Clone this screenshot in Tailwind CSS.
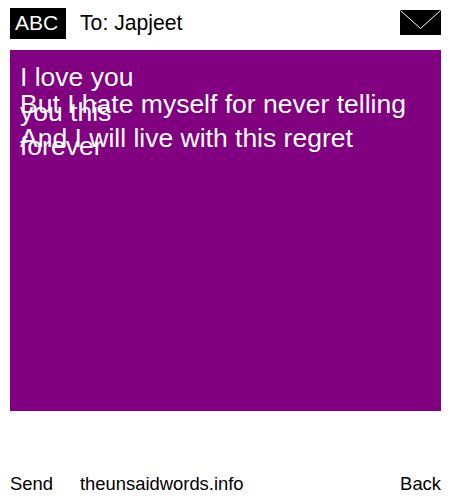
<!DOCTYPE html>
<html lang="en">
<head>
  <meta charset="UTF-8">
  <meta name="viewport" content="width=device-width, initial-scale=1.0">
  <title>The Unsaid Words</title>
  <script src="https://cdn.jsdelivr.net/npm/@tailwindcss/browser@4"></script>
</head>
<body class="bg-white text-black font-['Liberation_Sans',Arial,sans-serif]">
  <div class="flex h-[500px] w-[450px] flex-col pl-[10px] pr-[9px]">
    <header class="flex h-[50px] shrink-0 items-start pt-2">
      <div class="flex h-[31px] w-14 items-center bg-black pb-[2px] pl-[5px] text-[21px] text-white">ABC</div>
      <div class="ml-[14px] flex h-[31px] flex-1 items-center pb-[2px] text-[21.2px]">To: Japjeet</div>
      <svg class="mt-[2px] h-[25px] w-[41px]" viewBox="0 0 41 25">
        <rect width="41" height="25" fill="#000" />
        <path d="M0.5 0.5 L20.5 18.5 L40.5 0.5" fill="none" stroke="#fff" stroke-width="1" />
      </svg>
    </header>
    <main class="h-[361px] shrink-0 bg-[#800080] px-[10px] pt-[23px] text-[26.5px] leading-2 text-white">
      <p>I love you</p>
      <p class="mt-[19px]">But I hate myself for never telling you this</p>
      <p class="mt-[18px]">And I will live with this regret forever</p>
    </main>
    <footer class="mt-[59px] flex items-center text-[18.4px]">
      <span class="w-[70px]">Send</span>
      <span class="flex-1">theunsaidwords.info</span>
      <span>Back</span>
    </footer>
  </div>
</body>
</html>
